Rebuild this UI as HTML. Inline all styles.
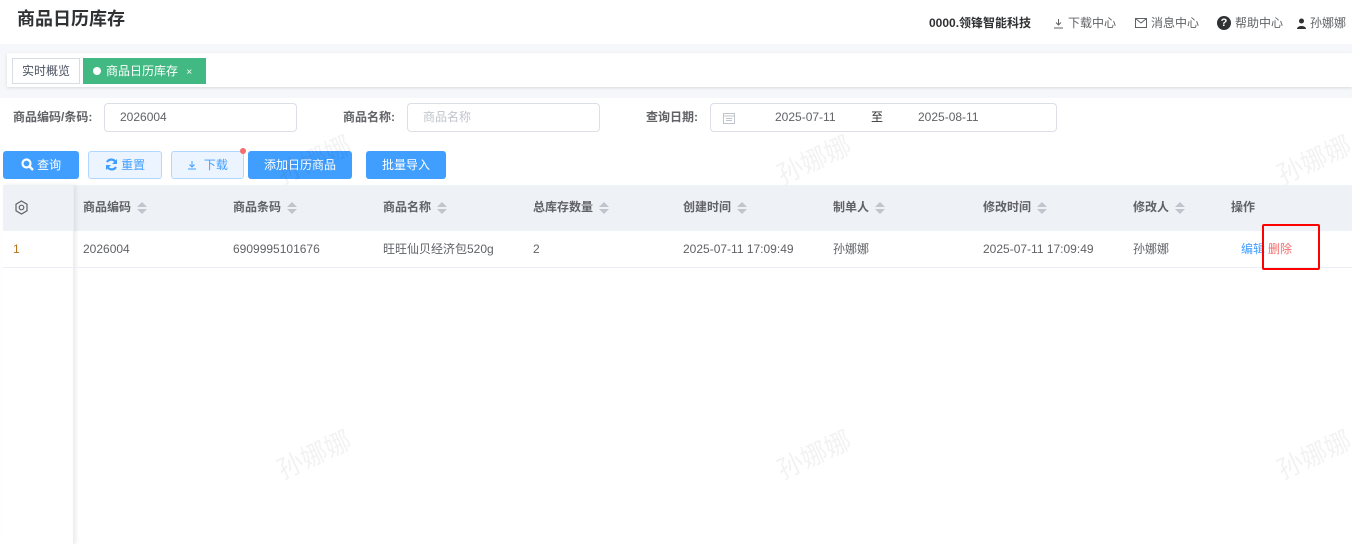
<!DOCTYPE html>
<html><head><meta charset="utf-8"><style>
*{box-sizing:border-box;margin:0;padding:0}
body{width:1352px;height:544px;overflow:hidden;background:#fff;font-family:"Liberation Sans","Noto Sans CJK SC",sans-serif;font-size:12px;line-height:16px;color:#606266;position:relative}
.abs{position:absolute;white-space:nowrap}
.title{left:17px;top:8px;font-size:18px;line-height:22px;font-weight:bold;color:#303133}
.top{top:15px;font-size:12px;color:#606266;display:flex;align-items:center;gap:4px}
.band{left:0;top:44px;width:1352px;height:54px;background:#f5f7fa}
.tabs{left:7px;top:53px;width:1345px;height:34px;background:#fff;box-shadow:0 1px 3px rgba(0,0,0,.12)}
.tab{top:58px;height:26px;line-height:24px;font-size:12px;padding:0 9px}
.lbl{top:109px;font-weight:bold;color:#606266;font-size:12px}
.inp{top:103px;height:29px;border:1px solid #dcdfe6;border-radius:4px;line-height:27px;padding-left:15px;font-size:12px}
.btn{top:151px;height:28px;border-radius:3px;line-height:28px;text-align:center;font-size:12px;color:#fff;background:#409eff}
.btn2{background:#ecf5ff;border:1px solid #b3d8ff;color:#409eff;line-height:26px}
.thead{left:3px;top:185px;width:1349px;height:46px;background:#eef1f6}
.th{top:199px;font-weight:bold;font-size:12px;color:#606266}
.td{top:241px;font-size:12px;color:#606266}
.sort{display:inline-block;vertical-align:middle;margin-left:6px;width:10px;height:14px;position:relative}
.sort:before,.sort:after{content:"";position:absolute;left:0;border-left:5px solid transparent;border-right:5px solid transparent}
.sort:before{top:1px;border-bottom:5px solid #c0c4cc}
.sort:after{top:8px;border-top:5px solid #c0c4cc}
.wm{font-size:26px;line-height:30px;color:rgba(0,0,0,.05);transform:rotate(-25deg)}
</style></head><body>
<div class="abs title">商品日历库存</div>
<div class="abs top" style="left:929px;font-weight:bold;color:#303133">0000.领锋智能科技</div>
<div class="abs top" style="left:1053px"><svg width="11" height="11" viewBox="0 0 11 11"><path d="M5.5 1v6M3 4.5l2.5 2.5 2.5-2.5M1 10h9" stroke="#606266" fill="none"/></svg>下载中心</div>
<div class="abs top" style="left:1135px"><svg width="12" height="10" viewBox="0 0 12 10"><rect x=".5" y=".5" width="11" height="9" stroke="#606266" fill="none"/><path d="M.5 .5L6 5l5.5-4.5" stroke="#606266" fill="none"/></svg>消息中心</div>
<div class="abs top" style="left:1217px"><span style="display:inline-block;width:14px;height:14px;border-radius:50%;background:#303133;color:#fff;font-size:11px;font-weight:bold;text-align:center;line-height:14px">?</span>帮助中心</div>
<div class="abs top" style="left:1297px"><svg width="9" height="11" viewBox="0 0 9 11"><circle cx="4.5" cy="3" r="2.5" fill="#303133"/><path d="M0 11c0-4 9-4 9 0z" fill="#303133"/></svg>孙娜娜</div>
<div class="abs band"></div>
<div class="abs tabs"></div>
<div class="abs tab" style="left:12px;border:1px solid #d8dce5;color:#495060;background:#fff">实时概览</div>
<div class="abs tab" style="left:83px;width:123px;background:#42b983;color:#fff;border:1px solid #42b983"><span style="display:inline-block;width:8px;height:8px;border-radius:50%;background:#fff;margin-right:5px;vertical-align:0"></span>商品日历库存 <span style="font-size:10px;margin-left:5px">×</span></div>
<div class="abs lbl" style="left:13px">商品编码/条码:</div>
<div class="abs inp" style="left:104px;width:193px">2026004</div>
<div class="abs lbl" style="left:343px">商品名称:</div>
<div class="abs inp" style="left:407px;width:193px;color:#c0c4cc">商品名称</div>
<div class="abs lbl" style="left:646px">查询日期:</div>
<div class="abs inp" style="left:710px;width:347px;padding:0">
<svg class="abs" style="left:12px;top:8px" width="12" height="12" viewBox="0 0 12 12"><rect x=".5" y="1.5" width="11" height="10" fill="none" stroke="#c0c4cc"/><path d="M.5 4h11M3 6.5h6M3 8.5h6" stroke="#c0c4cc"/></svg>
<span class="abs" style="left:64px">2025-07-11</span><span class="abs" style="left:160px;color:#303133">至</span><span class="abs" style="left:207px">2025-08-11</span></div>
<div class="abs btn" style="left:3px;width:76px"><svg width="13" height="13" viewBox="0 0 13 13" style="vertical-align:-2px"><circle cx="5.5" cy="5.5" r="4" stroke="#fff" stroke-width="2.2" fill="none"/><path d="M8.5 8.5l3.5 3.5" stroke="#fff" stroke-width="2.4"/></svg> 查询</div>
<div class="abs btn btn2" style="left:88px;width:74px"><svg width="13" height="13" viewBox="0 0 13 13" style="vertical-align:-2px"><path d="M11 5A5 5 0 0 0 2 4M2 8a5 5 0 0 0 9 1" stroke="#409eff" stroke-width="2.2" fill="none"/><path d="M12 1v5H7zM1 12V7h5z" fill="#409eff"/></svg> 重置</div>
<div class="abs btn btn2" style="left:171px;width:73px"><svg width="10" height="10" viewBox="0 0 10 10" style="vertical-align:-1px"><path d="M5 1v6M2.5 4.5L5 7l2.5-2.5M1 9h8" stroke="#409eff" fill="none"/></svg>&nbsp; 下载</div>
<div class="abs" style="left:240px;top:148px;width:6px;height:6px;border-radius:50%;background:#f56c6c"></div>
<div class="abs btn" style="left:248px;width:104px">添加日历商品</div>
<div class="abs btn" style="left:366px;width:80px">批量导入</div>
<div class="abs thead"></div>
<div class="abs" style="left:3px;top:185px;width:71px;height:359px;box-shadow:2px 0 4px rgba(0,0,0,.08);border-right:1px solid #ebeef5"></div>
<div class="abs" style="left:3px;top:267px;width:1349px;height:1px;background:#ebeef5"></div>
<svg class="abs" style="left:14px;top:200px" width="15" height="15" viewBox="0 0 15 15"><path d="M7.5 1l5.5 3.2v6.6L7.5 14 2 10.8V4.2z" fill="none" stroke="#606266" stroke-width="1.2"/><circle cx="7.5" cy="7.5" r="2.3" fill="none" stroke="#606266" stroke-width="1.2"/></svg>
<div class="abs th" style="left:83px">商品编码<i class="sort"></i></div>
<div class="abs th" style="left:233px">商品条码<i class="sort"></i></div>
<div class="abs th" style="left:383px">商品名称<i class="sort"></i></div>
<div class="abs th" style="left:533px">总库存数量<i class="sort"></i></div>
<div class="abs th" style="left:683px">创建时间<i class="sort"></i></div>
<div class="abs th" style="left:833px">制单人<i class="sort"></i></div>
<div class="abs th" style="left:983px">修改时间<i class="sort"></i></div>
<div class="abs th" style="left:1133px">修改人<i class="sort"></i></div>
<div class="abs th" style="left:1231px">操作</div>
<div class="abs td" style="left:13px;color:#b8741a">1</div>
<div class="abs td" style="left:83px">2026004</div>
<div class="abs td" style="left:233px">6909995101676</div>
<div class="abs td" style="left:383px">旺旺仙贝经济包520g</div>
<div class="abs td" style="left:533px">2</div>
<div class="abs td" style="left:683px">2025-07-11 17:09:49</div>
<div class="abs td" style="left:833px">孙娜娜</div>
<div class="abs td" style="left:983px">2025-07-11 17:09:49</div>
<div class="abs td" style="left:1133px">孙娜娜</div>
<div class="abs td" style="left:1241px;color:#409eff">编辑</div>
<div class="abs td" style="left:1268px;color:#f56c6c">删除</div>
<div class="abs" style="left:1262px;top:224px;width:58px;height:46px;border:2px solid #ff0000;border-radius:2px"></div>
<div class="abs wm" style="left:275px;top:145px">孙娜娜</div>
<div class="abs wm" style="left:775px;top:145px">孙娜娜</div>
<div class="abs wm" style="left:1275px;top:145px">孙娜娜</div>
<div class="abs wm" style="left:275px;top:440px">孙娜娜</div>
<div class="abs wm" style="left:775px;top:440px">孙娜娜</div>
<div class="abs wm" style="left:1275px;top:440px">孙娜娜</div>
</body></html>
